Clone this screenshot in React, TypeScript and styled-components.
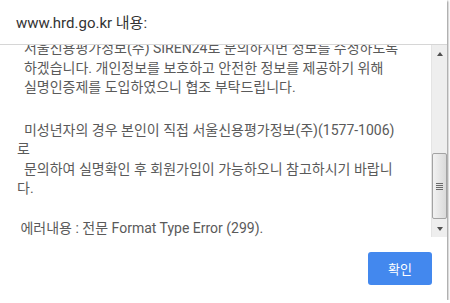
import React, { useEffect, useRef } from "react";
import styled, { createGlobalStyle } from "styled-components";

const GlobalStyle = createGlobalStyle`
  html, body {
    margin: 0;
    padding: 0;
    background: #ffffff;
    overflow: hidden;
  }
  * {
    box-sizing: border-box;
  }
`;

const Dialog = styled.div`
  display: flex;
  flex-direction: column;
  width: 447px;
  height: 300px;
  background: #ffffff;
  box-shadow: 1px 1px 2px rgba(0, 0, 0, 0.45);
  font-family: Roboto, "Noto Sans CJK KR", sans-serif;
`;

const Header = styled.div`
  height: 45px;
  padding: 0 0 1px 16px;
  display: flex;
  align-items: center;
  border-bottom: 1px solid #d6d6d6;
  color: #333333;
  font-size: 15px;
`;

const Body = styled.div`
  display: flex;
  flex-direction: row;
  height: 192px;
`;

const TextArea = styled.div`
  flex: 1;
  overflow: hidden;
  padding: 0 0 0 17px;
  color: #5a5a5a;
  font-size: 14px;
`;

const Paragraph = styled.div<{ $gap: number }>`
  line-height: 19.5px;
  white-space: pre;
  margin-bottom: ${(p) => p.$gap}px;
`;

const ScrollBar = styled.div`
  width: 16px;
  display: flex;
  flex-direction: column;
  background: #eeeeee;
  border-left: 1px solid #e4e4e4;
`;

const ArrowBox = styled.div`
  height: 17px;
  display: flex;
  align-items: center;
  justify-content: center;
`;

const Arrow = styled.div<{ $down?: boolean }>`
  width: 0;
  height: 0;
  border-left: 3.5px solid transparent;
  border-right: 3.5px solid transparent;
  ${(p) =>
    p.$down
      ? "border-top: 4px solid #505050;"
      : "border-bottom: 4px solid #505050;"}
`;

const Track = styled.div`
  flex: 1;
  display: flex;
  flex-direction: column;
  justify-content: flex-end;
  padding-bottom: 1px;
`;

const Thumb = styled.div`
  height: 66px;
  border: 1px solid #a3a3a3;
  border-radius: 2px;
  background: linear-gradient(to right, #f2f2f2, #dadada);
  display: flex;
  flex-direction: column;
  align-items: center;
  justify-content: center;
  gap: 1px;
`;

const Grip = styled.div`
  width: 7px;
  height: 1px;
  background: #6b6b6b;
`;

const Footer = styled.div`
  flex: 1;
  display: flex;
  justify-content: flex-end;
  align-items: flex-start;
  padding: 15px 15px 0 0;
`;

const Button = styled.button`
  width: 64px;
  height: 33px;
  border: none;
  border-radius: 3px;
  background: #4388ee;
  color: #ffffff;
  font-family: "Noto Sans CJK KR", sans-serif;
  font-size: 13px;
  cursor: pointer;
`;

const paragraphs = [
  {
    gap: 23,
    text: [
      "  서울신용평가정보(주) SIREN24로 문의하시면 정보를 수정하도록",
      "  하겠습니다. 개인정보를 보호하고 안전한 정보를 제공하기 위해",
      "  실명인증제를 도입하였으니 협조 부탁드립니다.",
    ],
  },
  {
    gap: 20,
    text: [
      "  미성년자의 경우 본인이 직접 서울신용평가정보(주)(1577-1006)",
      "로",
      "  문의하여 실명확인 후 회원가입이 가능하오니 참고하시기 바랍니",
      "다.",
    ],
  },
  {
    gap: 0,
    text: [" 에러내용 : 전문 Format Type Error (299)."],
  },
];

export default function App() {
  const textRef = useRef<HTMLDivElement>(null);

  useEffect(() => {
    // the message box is shown already scrolled a few pixels down
    if (textRef.current) textRef.current.scrollTop = 6;
  }, []);

  return (
    <>
      <GlobalStyle />
      <Dialog>
        <Header>www.hrd.go.kr 내용:</Header>
        <Body>
          <TextArea ref={textRef}>
            {paragraphs.map((p, i) => (
              <Paragraph $gap={p.gap} key={i}>
                {p.text.join("\n")}
              </Paragraph>
            ))}
            <Paragraph $gap={40}>{" "}</Paragraph>
          </TextArea>
          <ScrollBar>
            <ArrowBox>
              <Arrow />
            </ArrowBox>
            <Track>
              <Thumb>
                <Grip />
                <Grip />
                <Grip />
                <Grip />
              </Thumb>
            </Track>
            <ArrowBox>
              <Arrow $down />
            </ArrowBox>
          </ScrollBar>
        </Body>
        <Footer>
          <Button>확인</Button>
        </Footer>
      </Dialog>
    </>
  );
}
